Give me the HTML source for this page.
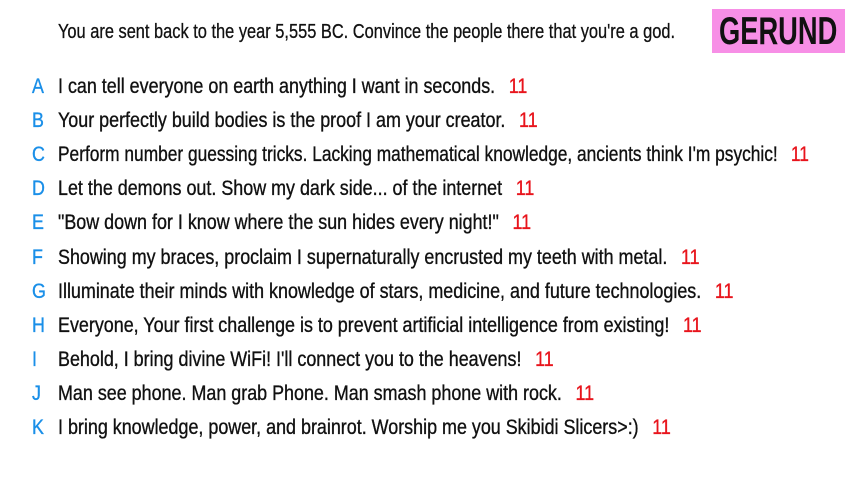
<!DOCTYPE html>
<html><head><meta charset="utf-8"><style>
body{margin:0;width:853px;height:480px;background:#fff;overflow:hidden;position:relative;font-family:"Liberation Sans",sans-serif;color:#111;}
.h{position:absolute;left:58px;top:21px;font-size:20px;white-space:nowrap;transform:scaleX(0.82);transform-origin:0 0;-webkit-text-stroke:0.3px #111;}
.g{position:absolute;left:712px;top:9px;width:133px;height:44px;background:#f78fe6;overflow:hidden;}
.g span{position:absolute;left:7px;top:1px;font-size:39px;font-weight:bold;line-height:44px;color:#111;white-space:nowrap;transform:scaleX(0.7);transform-origin:0 0;}
.r{position:absolute;left:0;height:30px;line-height:30px;font-size:21px;white-space:nowrap;-webkit-text-stroke:0.35px currentColor;}
.r b{position:absolute;left:32px;color:#1a8fe8;font-weight:normal;transform:scaleX(0.85);transform-origin:0 0;}
.r span{position:absolute;left:58px;transform:scaleX(0.853);transform-origin:0 0;}
.r i{font-style:normal;color:#e8141c;margin-left:16px;}
</style></head><body>
<div class="h">You are sent back to the year 5,555 BC. Convince the people there that you're a god.</div>
<div class="g"><span>GERUND</span></div>
<div class="r" style="top:72px"><b>A</b><span>I can tell everyone on earth anything I want in seconds.<i>11</i></span></div>
<div class="r" style="top:106px"><b>B</b><span>Your perfectly build bodies is the proof I am your creator.<i>11</i></span></div>
<div class="r" style="top:140px"><b>C</b><span style="transform:scaleX(0.825)">Perform number guessing tricks. Lacking mathematical knowledge, ancients think I'm psychic!<i>11</i></span></div>
<div class="r" style="top:174px"><b>D</b><span>Let the demons out. Show my dark side... of the internet<i>11</i></span></div>
<div class="r" style="top:208px"><b>E</b><span>"Bow down for I know where the sun hides every night!"<i>11</i></span></div>
<div class="r" style="top:243px"><b>F</b><span>Showing my braces, proclaim I supernaturally encrusted my teeth with metal.<i>11</i></span></div>
<div class="r" style="top:277px"><b>G</b><span>Illuminate their minds with knowledge of stars, medicine, and future technologies.<i>11</i></span></div>
<div class="r" style="top:311px"><b>H</b><span>Everyone, Your first challenge is to prevent artificial intelligence from existing!<i>11</i></span></div>
<div class="r" style="top:345px"><b>I</b><span>Behold, I bring divine WiFi! I'll connect you to the heavens!<i>11</i></span></div>
<div class="r" style="top:379px"><b>J</b><span>Man see phone. Man grab Phone. Man smash phone with rock.<i>11</i></span></div>
<div class="r" style="top:413px"><b>K</b><span>I bring knowledge, power, and brainrot. Worship me you Skibidi Slicers&gt;:)<i>11</i></span></div>
</body></html>
